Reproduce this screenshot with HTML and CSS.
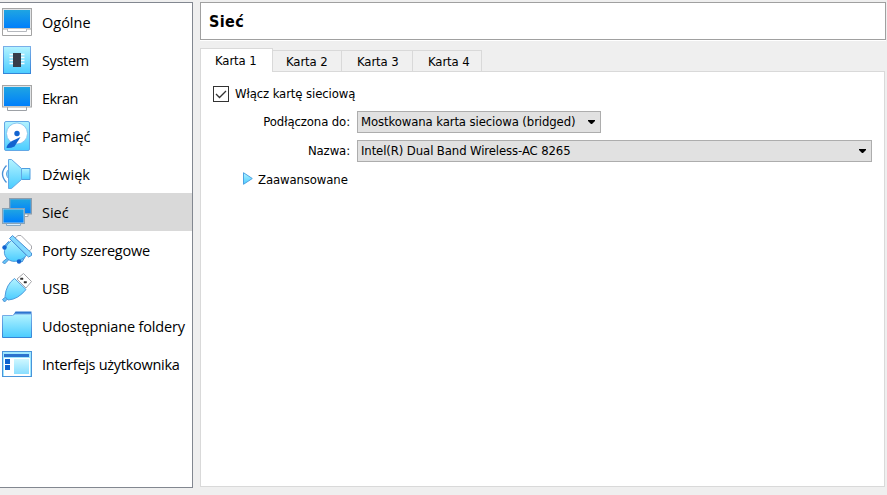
FILE: index.html
```html
<!DOCTYPE html>
<html lang="pl">
<head>
<meta charset="utf-8">
<title>Sieć</title>
<link rel="stylesheet" href="styles.css">
</head>
<body>
<svg class="defs" width="0" height="0" aria-hidden="true">
  <defs>
    <linearGradient id="screen" x1="0" y1="0" x2="0" y2="1"><stop offset="0" stop-color="#1fa5e2"/><stop offset="1" stop-color="#007ffb"/></linearGradient>
    <linearGradient id="light" x1="0" y1="0" x2="0" y2="1"><stop offset="0" stop-color="#b4f3ff"/><stop offset="1" stop-color="#4accff"/></linearGradient>
    <linearGradient id="edge" x1="0" y1="0" x2="0" y2="1"><stop offset="0" stop-color="#79aee8"/><stop offset="1" stop-color="#3485d8"/></linearGradient>
  </defs>
</svg>
<div class="window">
  <nav class="sidebar">
    <div class="item">
      <svg class="icon" viewBox="0 3 34 38"><path d="M2.500 28v7.500h29V28" fill="#fff" stroke="#a3a3a3"/><rect x="2.500" y="8.500" width="29" height="20.500" fill="#e0e3e6" stroke="#a6a6a6"/><path d="M7.500 29v2.500h19V29" fill="#fff" stroke="#b5b8bd"/><rect x="4" y="10" width="26" height="18" fill="url(#screen)"/></svg>
      <span class="general">Ogólne</span>
    </div>
    <div class="item">
      <svg class="icon" viewBox="0 41 34 38"><rect x="3.500" y="46.500" width="27" height="27" fill="url(#light)" stroke="url(#edge)"/><path d="M9.500 54.500h15M9.500 57.500h15M9.500 60.500h15M9.500 63.500h15" stroke="#f4fcff" stroke-width="1.400"/><rect x="13" y="53" width="8" height="14" fill="#383d4a"/></svg>
      <span class="system">System</span>
    </div>
    <div class="item">
      <svg class="icon" viewBox="0 79 34 38"><path d="M7.500 106v4.500h19V106" fill="#fff" stroke="#9da1a6"/><rect x="2.500" y="85.500" width="29" height="21.500" fill="#e0e3e6" stroke="#a6a6a6"/><rect x="4" y="87" width="26" height="19" fill="url(#screen)"/></svg>
      <span class="display">Ekran</span>
    </div>
    <div class="item">
      <svg class="icon" viewBox="0 117 34 38"><rect x="4.500" y="121.500" width="25" height="29" rx="1.500" fill="url(#light)" stroke="#63a8e5"/><circle cx="17" cy="133.500" r="10.500" fill="#fff" stroke="#7bbced" stroke-width=".8"/><path d="M20.500 137l-6 9.500q-4 2-8 1.500 0-3.500 5.500-7z" fill="#1264d0"/><circle cx="17" cy="133.500" r="2.700" fill="#1264d0"/></svg>
      <span class="storage">Pamięć</span>
    </div>
    <div class="item">
      <svg class="icon" viewBox="0 155 34 38"><path d="M6.500 165.500q-8 8.500 0 17" fill="none" stroke="#4a91d6" stroke-width="1.300"/><path d="M8.500 169.500q-4 4.500 0 9" fill="#91dfff" stroke="#5ba5e0"/><path d="M21.500 168.500h8.500v11h-8.500z" fill="url(#light)" stroke="#4e9de0"/><path d="M8.500 159.500h3l10 9v11l-10 9h-3z" fill="url(#light)" stroke="#63a8e5"/></svg>
      <span class="audio">Dźwięk</span>
    </div>
    <div class="item selected">
      <svg class="icon" viewBox="0 193 34 38"><path d="M24 214v2.500h4V214" fill="#fff" stroke="#9da1a6"/><rect x="9.500" y="198.500" width="22" height="15.500" fill="#6fa4cb" stroke="#8e9dab"/><rect x="10.500" y="199.500" width="20" height="13.500" fill="url(#screen)"/><path d="M6.500 223v2.500h14V223" fill="#d6edff" stroke="#84a7c4"/><rect x="2.500" y="208.500" width="22" height="15" fill="#a8cce6" stroke="#8aa3b6"/><rect x="3.500" y="209.500" width="20" height="13" fill="url(#screen)"/></svg>
      <span class="network">Sieć</span>
    </div>
    <div class="item">
      <svg class="icon" viewBox="0 231 34 38"><path d="M15 238l3-2.500h3L31.500 246v3l-3 2.500z" fill="#fff" stroke="#a8a8ad"/><path d="M3.500 247l5-5.500 4 3-6 6z" fill="#63c5f7" stroke="#4a91d6"/><path d="M2.500 262l5-4 1.500 1.500-4.500 4.500z" fill="#63c5f7" stroke="#4a91d6"/><path d="M17 260l5-4 3 1-3 5z" fill="#63c5f7" stroke="#4a91d6"/><path d="M11.500 240.500L26.500 255.500q-3 3-7.500 5-7 2.500-12-2-4.500-5-1.500-11 2-4 6-7z" fill="url(#light)" stroke="#4d9bdd"/><circle cx="4.500" cy="247.500" r="2.200" fill="#1264d0"/><circle cx="19" cy="261.500" r="2.200" fill="#1264d0"/><path d="M9.500 238.500l3-3L31.500 253v2.500l-3 1.500z" fill="#83d9ff" stroke="#4a91d6"/></svg>
      <span class="serial">Porty szeregowe</span>
    </div>
    <div class="item">
      <svg class="icon" viewBox="0 269 34 38"><path d="M17 279l6.500-5.500 8 8L26 288z" fill="#fff" stroke="#a6a6aa"/><path d="M20.500 279.500h2.500v-1.500h-2.500zM24 283h2.500v-1.500H24z" fill="#333" stroke="#333" stroke-width=".5"/><path d="M2.500 299.500l3-2.500 2 2-3 3z" fill="#63c5f7" stroke="#4a91d6"/><path d="M14.500 278.500l11.500 11q-8 10-18 10.500l-3-3.500q1-12 9.500-18z" fill="url(#light)" stroke="#4d9bdd"/></svg>
      <span class="usb">USB</span>
    </div>
    <div class="item">
      <svg class="icon" viewBox="0 307 34 38"><path d="M12 317l3.500-5.500h16v5.500z" fill="#2c75cf"/><path d="M2.500 315.500h10l2.500-1.500h16.500v23.500h-29z" fill="url(#light)" stroke="url(#edge)"/></svg>
      <span class="folders">Udostępniane foldery</span>
    </div>
    <div class="item">
      <svg class="icon" viewBox="0 345 34 38"><rect x="2.500" y="351.500" width="29" height="25" fill="#fff" stroke="#4994da"/><path d="M3 352h28v6H3z" fill="#9ee7ff"/><path d="M4 354h25v3H4z" fill="#2b73ce"/><path d="M5 359h5v5H5zM5 365h5v5H5z" fill="#0d63ce"/><rect x="14" y="359" width="15" height="15" fill="url(#light)" opacity=".65"/><path d="M30.500 352v24M3.500 352v24" stroke="#9ee7ff"/></svg>
      <span class="interface">Interfejs użytkownika</span>
    </div>
  </nav>
  <main class="content">
    <h1 class="title"><span>Sieć</span></h1>
    <div class="tabs">
      <div class="tab active">Karta 1</div>
      <div class="tab">Karta 2</div>
      <div class="tab">Karta 3</div>
      <div class="tab">Karta 4</div>
    </div>
    <section class="pane">
      <div class="check-row">
        <svg class="checkbox" viewBox="0 0 16 16"><rect x=".5" y=".5" width="15" height="15" fill="#fff" stroke="#333"/><path d="M3 8l3.500 3.500L13 5" fill="none" stroke="#333" stroke-width="1.300"/></svg>
        <span class="enable">Włącz kartę sieciową</span>
      </div>
      <div class="field">
        <label class="attached">Podłączona do:</label>
        <div class="select short"><span class="mode">Mostkowana karta sieciowa (bridged)</span><svg class="arrow" viewBox="0 0 7 4"><path d="M0 0h7v1L4 4H3L0 1z"/></svg></div>
      </div>
      <div class="field">
        <label class="name">Nazwa:</label>
        <div class="select"><span class="device">Intel(R) Dual Band Wireless-AC 8265</span><svg class="arrow" viewBox="0 0 7 4"><path d="M0 0h7v1L4 4H3L0 1z"/></svg></div>
      </div>
      <div class="advanced">
        <svg class="triangle" viewBox="0 0 10 13"><path d="M.5.700v11.600L9.300 6.500z" fill="url(#light)" stroke="#4da3e3"/></svg>
        <span class="more">Zaawansowane</span>
      </div>
    </section>
  </main>
</div>
</body>
</html>
```
FILE: styles.css
```css
* { box-sizing: border-box; }
body {
  margin: 0;
  background: #efefef;
  color: #000;
  font: 13px/16px "DejaVu Sans Condensed", "DejaVu Sans", sans-serif;
  font-stretch: condensed;
  letter-spacing: -.11px;
  overflow: hidden;
}
.defs { position: absolute; }
.window {
  display: flex;
  gap: 7px;
  width: 887px;
  height: 495px;
  padding: 2px 0 7px;
}
.sidebar {
  width: 193px;
  height: 486px;
  background: #fff;
  border: 1px solid #828790;
  border-left: 0;
  font: 14.500px/20px "Open Sans", "Noto Sans", sans-serif;
  letter-spacing: 0;
}
.item {
  display: flex;
  align-items: center;
  gap: 8px;
  height: 38px;
  white-space: nowrap;
}
.item span { padding-top: 2px; }
.item.selected { background: #d9d9d9; }
.icon { width: 34px; height: 38px; flex: none; }
.system { letter-spacing: -.35px; }
.display { letter-spacing: -.55px; }
.storage { letter-spacing: -.1px; }
.serial { letter-spacing: -.24px; }
.usb { letter-spacing: -.3px; }
.folders { letter-spacing: -.16px; }
.interface { letter-spacing: -.28px; }
.content {
  display: flex;
  flex-direction: column;
  width: 687px;
}
.title {
  display: flex;
  align-items: center;
  width: 686px;
  height: 38px;
  flex: none;
  margin: 0 0 8px;
  padding: 2px 0 0 8px;
  background: #fff;
  border: 1px solid #a0a0a0;
  box-shadow: 0 1px #fff;
  font: bold 16px/20px "DejaVu Sans Condensed", "DejaVu Sans", sans-serif;
  letter-spacing: .4px;
}
.tabs {
  display: flex;
  align-items: flex-end;
  height: 23px;
}
.tab {
  width: 71px;
  height: 21px;
  padding: 3px 0 0 15px;
  border: 1px solid #d9d9d9;
  border-width: 1px 1px 0 0;
  background: #f0f0f0;
  white-space: nowrap;
}
.tab:nth-child(2), .tab:nth-child(4) { width: 69px; }
.tab:nth-child(2) { padding-left: 13px; }
.tab.active {
  width: 73px;
  height: 24px;
  margin-bottom: -1px;
  padding: 4px 0 0 14px;
  border-left-width: 1px;
  background: #fff;
  position: relative;
}
.pane {
  width: 685px;
  height: 416px;
  padding: 14px 0 0 12px;
  background: #fff;
  border: 1px solid #d9d9d9;
}
.check-row { display: flex; align-items: center; gap: 6px; height: 16px; margin-bottom: 9px; }
.checkbox { width: 16px; height: 16px; }
.field { display: flex; align-items: center; gap: 7px; height: 22px; margin-bottom: 7px; }
.field label { width: 137px; text-align: right; white-space: nowrap; }
.select {
  display: flex;
  align-items: center;
  justify-content: space-between;
  width: 515px;
  height: 22px;
  padding: 0 5px 0 3px;
  background: #e1e1e1;
  border: 1px solid #adadad;
  white-space: nowrap;
}
.select.short { width: 244px; }
.arrow { width: 7px; height: 4px; margin-top: -1px; }
.advanced { display: flex; align-items: center; gap: 5px; height: 16px; margin-left: 30px; margin-top: 10px; }
.triangle { width: 10px; height: 13px; margin-top: -3px; }
```
